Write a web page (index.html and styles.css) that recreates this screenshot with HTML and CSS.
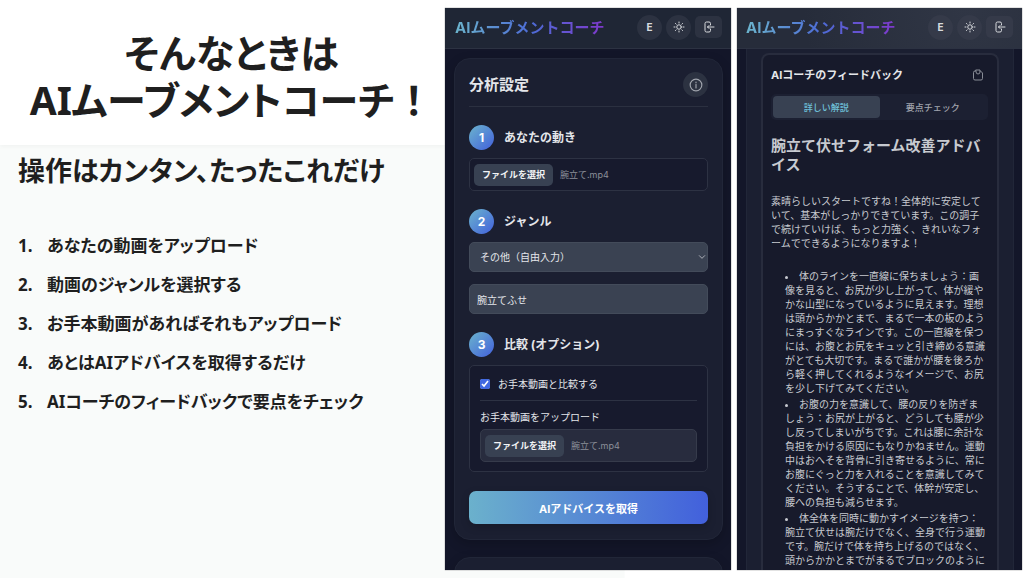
FILE: index.html
```html
<!DOCTYPE html>
<html lang="ja">
	<head>
		<meta charset="utf-8">
		<meta name="viewport" content="width=device-width, initial-scale=1">
		<title>AIムーブメントコーチ</title>
		<link rel="stylesheet" href="styles.css">
	</head>
	<body>
		<div class="slide">
			<section class="intro">
				<header class="intro-head">
					<h1>そんなときは<br>AIムーブメントコーチ<span class="mark">！</span></h1>
				</header>
				<h2>操作はカンタン、たったこれだけ</h2>
				<ol>
					<li>あなたの動画をアップロード</li>
					<li>動画のジャンルを選択する</li>
					<li>お手本動画があればそれもアップロード</li>
					<li>あとはAIアドバイスを取得するだけ</li>
					<li>AIコーチのフィードバックで要点をチェック</li>
				</ol>
			</section>

			<!-- settings screen -->
			<section class="phone">
				<header class="topbar">
					<div class="brand">AIムーブメントコーチ</div>
					<button class="round" type="button" aria-label="Language">E</button>
					<button class="round" type="button" aria-label="テーマ">
						<svg width="12" height="12" viewBox="0 0 24 24"><circle cx="12" cy="12" r="4.5"/><path d="M12 2v2M12 20v2M2 12h2M20 12h2M4.9 4.9l1.4 1.4M17.7 17.7l1.4 1.4M4.9 19.1l1.4-1.4M17.7 6.3l1.4-1.4"/></svg>
					</button>
					<button class="exit" type="button" aria-label="ログアウト">
						<svg width="12" height="12" viewBox="0 0 24 24"><path d="M15 8V5a3 3 0 0 0-3-3H7a3 3 0 0 0-3 3v14a3 3 0 0 0 3 3h5a3 3 0 0 0 3-3v-3M22 12H9M12 9l-3 3 3 3"/></svg>
					</button>
				</header>
				<main class="screen">
					<form class="card">
						<div class="card-head">
							<h3>分析設定</h3>
							<button class="round info" type="button" aria-label="情報">
								<svg width="14" height="14" viewBox="0 0 24 24"><circle cx="12" cy="12" r="10"/><path d="M12 11v6M12 7v1"/></svg>
							</button>
						</div>

						<h4 class="step"><span class="num">1</span>あなたの動き</h4>
						<div class="file">
							<button type="button">ファイルを選択</button>
							<span>腕立て.mp4</span>
						</div>

						<h4 class="step"><span class="num">2</span><label for="genre">ジャンル</label></h4>
						<div class="select">
							<select id="genre">
								<option>その他（自由入力）</option>
							</select>
							<svg width="8" height="8" viewBox="0 0 24 24"><path d="M4 8l8 8 8-8"/></svg>
						</div>
						<input class="text" type="text" value="腕立てふせ" aria-label="ジャンル名">

						<h4 class="step"><span class="num">3</span>比較 (オプション)</h4>
						<div class="compare">
							<label class="check"><input type="checkbox" checked>お手本動画と比較する</label>
							<p>お手本動画をアップロード</p>
							<div class="file file-light">
								<button type="button">ファイルを選択</button>
								<span>腕立て.mp4</span>
							</div>
						</div>

						<button class="submit" type="button">AIアドバイスを取得</button>
					</form>
					<div class="card card-next"></div>
				</main>
			</section>

			<!-- feedback screen -->
			<section class="phone">
				<header class="topbar topbar-glow">
					<div class="brand">AIムーブメントコーチ</div>
					<button class="round" type="button" aria-label="Language">E</button>
					<button class="round" type="button" aria-label="テーマ">
						<svg width="12" height="12" viewBox="0 0 24 24"><circle cx="12" cy="12" r="4.5"/><path d="M12 2v2M12 20v2M2 12h2M20 12h2M4.9 4.9l1.4 1.4M17.7 17.7l1.4 1.4M4.9 19.1l1.4-1.4M17.7 6.3l1.4-1.4"/></svg>
					</button>
					<button class="exit" type="button" aria-label="ログアウト">
						<svg width="12" height="12" viewBox="0 0 24 24"><path d="M15 8V5a3 3 0 0 0-3-3H7a3 3 0 0 0-3 3v14a3 3 0 0 0 3 3h5a3 3 0 0 0 3-3v-3M22 12H9M12 9l-3 3 3 3"/></svg>
					</button>
				</header>
				<main class="screen screen-scrolled">
					<div class="result">
						<article class="feedback">
							<div class="feedback-head">
								<h3>AIコーチのフィードバック</h3>
								<button type="button" aria-label="コピー">
									<svg width="12" height="12" viewBox="0 0 24 24"><path d="M8 4H6a3 3 0 0 0-3 3v12a3 3 0 0 0 3 3h12a3 3 0 0 0 3-3V8l-4-4h-1M8 2h8v4a4 4 0 0 1-8 0z"/></svg>
								</button>
							</div>
							<div class="tabs">
								<button class="active" type="button">詳しい解説</button>
								<button type="button">要点チェック</button>
							</div>
							<h2>腕立て伏せフォーム改善アドバイス</h2>
							<p>素晴らしいスタートですね！全体的に安定していて、基本がしっかりできています。この調子で続けていけば、もっと力強く、きれいなフォームでできるようになりますよ！</p>
							<ul>
								<li>体のラインを一直線に保ちましょう：画像を見ると、お尻が少し上がって、体が緩やかな山型になっているように見えます。理想は頭からかかとまで、まるで一本の板のようにまっすぐなラインです。この一直線を保つには、お腹とお尻をキュッと引き締める意識がとても大切です。まるで誰かが腰を後ろから軽く押してくれるようなイメージで、お尻を少し下げてみてください。</li>
								<li>お腹の力を意識して、腰の反りを防ぎましょう：お尻が上がると、どうしても腰が少し反ってしまいがちです。これは腰に余計な負担をかける原因にもなりかねません。運動中はおへそを背骨に引き寄せるように、常にお腹にぐっと力を入れることを意識してみてください。そうすることで、体幹が安定し、腰への負担も減らせます。</li>
								<li>体全体を同時に動かすイメージを持つ：腕立て伏せは腕だけでなく、全身で行う運動です。腕だけで体を持ち上げるのではなく、頭からかかとまでがまるでブロックのように</li>
							</ul>
						</article>
					</div>
				</main>
			</section>
		</div>
	</body>
</html>
```
FILE: styles.css
```css
* {
	box-sizing: border-box;
}
body {
	margin: 0;
	background: #fff linear-gradient(#f9fbfa, #f9fbfa) no-repeat 0 145px / 61% 100%;
	color: #1f1f1f;
	font-family: "Noto Sans", "Noto Sans CJK JP", sans-serif;
}
h1, h2, h3, h4, p, ol, ul {
	margin: 0;
	padding: 0;
}
button, input, select {
	margin: 0;
	padding: 0;
	border: 0;
	color: inherit;
	font: inherit;
}
svg {
	display: block;
	fill: none;
	stroke: currentColor;
	stroke-width: 2;
	stroke-linecap: round;
	stroke-linejoin: round;
}
.slide {
	display: grid;
	grid-template-columns: 445fr 286fr 6px 285fr 2px;
	height: 100vh;
}
.slide .phone:last-child {
	grid-column: 4;
}

/* left side */
.intro {
	font-feature-settings: "palt";
	font-weight: 700;
}
.intro-head {
	height: 145px;
	padding-top: 29px;
	background: #fff;
	box-shadow: 0 2px 4px rgba(0, 0, 0, 0.03);
}
.intro h1 {
	padding-left: 18px;
	font-size: 39px;
	line-height: 47px;
	text-align: center;
	white-space: nowrap;
}
.intro .mark {
	font-feature-settings: normal;
}
.intro h2 {
	padding: 7px 0 0 18px;
	font-size: 27px;
	line-height: 38px;
	white-space: nowrap;
}
.intro ol {
	margin-top: 36px;
	padding-left: 18px;
	list-style: none;
	counter-reset: step;
	font-size: 17px;
	line-height: 39px;
}
.intro li {
	display: grid;
	grid-template-columns: 29px 1fr;
	counter-increment: step;
}
.intro li::before {
	content: counter(step) ".";
}

/* phones */
.phone {
	display: flex;
	flex-direction: column;
	height: calc(100vh - 16px);
	margin-top: 8px;
	overflow: hidden;
	background: #131629;
	box-shadow: 0 0 1px #555;
	color: #e4e6ea;
	font-family: Inter, "Noto Sans CJK JP", sans-serif;
	font-size: 10px;
}
.topbar {
	flex: none;
	display: flex;
	align-items: center;
	height: 41px;
	padding: 0 9px 2px 10px;
	border-bottom: 1px solid #2c3242;
	background: #1f2635;
}
.topbar-glow {
	padding-left: 9px;
	background: radial-gradient(circle at 80% 0, #303645, #262c3a 70%);
}
.brand {
	margin-right: auto;
	padding-bottom: 2px;
	background: linear-gradient(90deg, #6bb4cd, #4d6cd6 50%, #8038cc);
	-webkit-background-clip: text;
	background-clip: text;
	color: transparent;
	font-size: 15px;
	font-weight: 700;
	white-space: nowrap;
}
.round, .exit {
	display: grid;
	place-items: center;
	width: 25px;
	height: 25px;
	margin-left: 4px;
	border-radius: 50%;
	background: #2c3241;
	color: #d8dade;
	font-weight: 700;
}
.exit {
	width: 27px;
	height: 22px;
	border-radius: 5px;
}
.topbar-glow .round, .topbar-glow .exit {
	background: #353a49;
}
.screen {
	flex: 1;
	min-height: 0;
	padding: 9px 8px 0 9px;
}
.card {
	padding: 13px 14px 15px;
	border: 1px solid #212638;
	border-radius: 16px;
	background: #1b1f31;
	box-shadow: 0 4px 12px rgba(0, 0, 0, 0.2);
}
.card-next {
	height: 80px;
	margin-top: 17px;
}
.card-head {
	display: flex;
	align-items: center;
	justify-content: space-between;
	padding-bottom: 9px;
	border-bottom: 1px solid #2b3040;
}
.card-head h3 {
	font-size: 15px;
	line-height: 24px;
}
.info {
	color: #a0a4ad;
}
.step {
	display: flex;
	align-items: center;
	gap: 10px;
	margin: 18px 0 8px;
	font-size: 12px;
	line-height: 18px;
}
.num {
	display: grid;
	place-items: center;
	width: 25px;
	height: 25px;
	border-radius: 50%;
	background: linear-gradient(135deg, #6bb4cd, #4260dc);
	color: #fff;
}
.file {
	display: flex;
	align-items: center;
	gap: 7px;
	height: 33px;
	padding: 0 4px;
	border: 1px solid #2d3243;
	border-radius: 5px;
	background: #171a2d;
	color: #8b8f99;
	font-size: 9px;
}
.file button {
	height: 22px;
	padding: 0 8px;
	border-radius: 5px;
	background: #384152;
	color: #f2f3f5;
	font-weight: 700;
}
.file-light {
	border-color: #363b4b;
	background: #282c3e;
}
.select {
	display: grid;
	align-items: center;
}
.select select, .select svg {
	grid-area: 1 / 1;
}
.select svg {
	justify-self: end;
	margin-right: 2px;
	pointer-events: none;
}
.select select, .text {
	width: 100%;
	height: 30px;
	padding: 0 10px;
	border: 1px solid #434b5a;
	border-radius: 5px;
	background: #3a4252;
	appearance: none;
}
.text {
	display: block;
	margin-top: 12px;
	padding: 0 7px;
}
.compare {
	padding: 10px 10px 9px;
	border: 1px solid #2d3243;
	border-radius: 5px;
	background: #171a2d;
}
.check {
	display: flex;
	align-items: center;
	gap: 8px;
	padding-bottom: 8px;
	border-bottom: 1px solid #2d3243;
	line-height: 16px;
}
.check input {
	width: 10px;
	height: 10px;
	accent-color: #4169e1;
}
.compare p {
	padding: 8px 0 4px;
	line-height: 16px;
}
.submit {
	display: block;
	width: 100%;
	height: 33px;
	margin-top: 19px;
	border-radius: 7px;
	background: linear-gradient(90deg, #6bb1cc, #4260dc);
	box-shadow: 0 3px 8px rgba(0, 0, 0, 0.2);
	color: #fff;
	font-size: 11px;
	font-weight: 700;
}

/* feedback */
.screen-scrolled {
	padding: 0 8px 0 9px;
}
.result {
	height: 100%;
	padding: 4px 14px 0;
	border: solid #212638;
	border-width: 0 1px;
	background: #1b1f31;
}
.feedback {
	height: 100%;
	padding: 11px 9px 0 8px;
	border: 2px solid #282c3d;
	border-bottom: 0;
	border-radius: 8px 8px 0 0;
	background: #171a2b;
	color: #c7cad0;
}
.feedback-head {
	display: flex;
	align-items: center;
	justify-content: space-between;
	padding-right: 4px;
}
.feedback-head h3 {
	color: #e4e6ea;
	font-size: 11px;
	line-height: 18px;
}
.feedback-head button {
	background: none;
	color: #888c96;
}
.tabs {
	display: grid;
	grid-template-columns: 1fr 1fr;
	margin: 10px 0 16px;
	padding: 2px;
	border-radius: 5px;
	background: #1c2032;
}
.tabs button {
	height: 22px;
	border-radius: 4px;
	background: none;
	color: #a0a4ad;
	font-size: 9px;
	font-weight: 500;
}
.tabs .active {
	background: #384152;
	color: #6fc0d8;
}
.feedback h2 {
	font-size: 15px;
	line-height: 19px;
}
.feedback p {
	margin: 20px 0 19px;
	line-height: 14px;
}
.feedback ul {
	padding-left: 14px;
	list-style: disc inside;
}
.feedback li {
	margin-bottom: 2px;
	line-height: 14px;
}
```
